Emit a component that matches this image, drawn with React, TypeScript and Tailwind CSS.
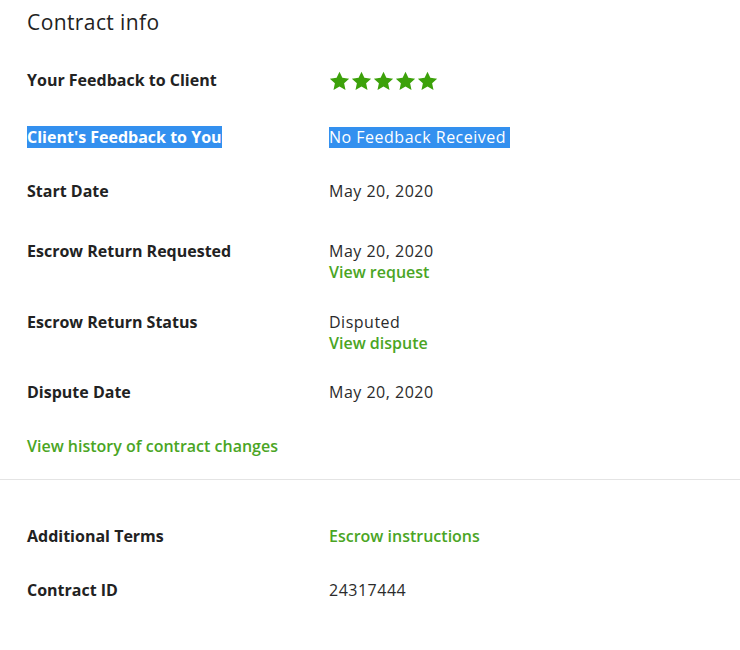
const Star = () => (
  <svg width="21" height="20" viewBox="0 0 24 23" className="shrink-0">
    <path
      d="M12 0.8l3.3 7.1 7.8 0.9-5.8 5.3 1.6 7.7L12 17.9l-6.9 3.9 1.6-7.7L0.9 8.8l7.8-0.9z"
      fill="#3ca10a"
    />
  </svg>
);

const Row = ({
  label,
  children,
  className = "",
}: {
  label: React.ReactNode;
  children: React.ReactNode;
  className?: string;
}) => (
  <div className={`flex ${className}`}>
    <div className="w-[302px] shrink-0 font-bold tracking-normal text-[#222]">{label}</div>
    <div className="flex flex-col">{children}</div>
  </div>
);

export default function App() {
  return (
    <div
      className="w-[740px] h-[650px] bg-white text-[16px] leading-[21px] tracking-[0.5px] text-[#2b2b2b]"
      style={{ fontFamily: '"Open Sans", "Liberation Sans", sans-serif' }}
    >
      <div className="px-[27px]">
        {/* Title */}
        <h1 className="pt-[8px] text-[21px] leading-[28px] font-medium tracking-[0.4px] text-[#222]">
          Contract info
        </h1>

        <Row label="Your Feedback to Client" className="mt-[34px] items-center">
          <div className="flex gap-[1px]">
            <Star />
            <Star />
            <Star />
            <Star />
            <Star />
          </div>
        </Row>

        <Row
          label={
            <span className="bg-[#3390ef] text-white">
              Client's Feedback to You
            </span>
          }
          className="mt-[36px]"
        >
          <span className="bg-[#3390ef] text-white pr-[4px]">
            No Feedback Received
          </span>
        </Row>

        <Row label="Start Date" className="mt-[33px]">
          <span>May 20, 2020</span>
        </Row>

        <Row label="Escrow Return Requested" className="mt-[39px]">
          <span>May 20, 2020</span>
          <a className="font-semibold tracking-normal text-[#4aa524]">View request</a>
        </Row>

        <Row label="Escrow Return Status" className="mt-[29px]">
          <span>Disputed</span>
          <a className="font-semibold tracking-normal text-[#4aa524]">View dispute</a>
        </Row>

        <Row label="Dispute Date" className="mt-[28px]">
          <span>May 20, 2020</span>
        </Row>

        <a className="block mt-[33px] font-semibold tracking-normal text-[#4aa524]">
          View history of contract changes
        </a>
      </div>

      <div className="mt-[22px] border-t border-[#e4e4e4]" />

      <div className="px-[27px]">
        <Row label="Additional Terms" className="mt-[46px]">
          <a className="font-semibold tracking-normal text-[#4aa524]">Escrow instructions</a>
        </Row>

        <Row label="Contract ID" className="mt-[33px]">
          <span>24317444</span>
        </Row>
      </div>
    </div>
  );
}
